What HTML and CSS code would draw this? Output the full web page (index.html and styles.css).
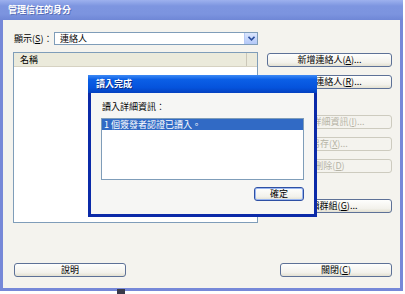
FILE: index.html
```html
<!DOCTYPE html>
<html lang="zh-Hant">
<head>
  <meta charset="UTF-8" />
  <title>管理信任的身分</title>
  <link rel="stylesheet" href="styles.css">
</head>
<body>
  <div class="window">
    <div class="titlebar">管理信任的身分</div>

    <div class="content">
      <div class="main">
        <div class="left-col">
          <div class="show-row">
            <span class="label">顯示(<u>S</u>)：</span>
            <div class="combo">
              <span class="combo-text">連絡人</span>
              <span class="combo-btn">
                <svg width="7" height="5" viewBox="0 0 7 5"><path d="M0.5 0.8 L3.5 3.8 L6.5 0.8" fill="none" stroke="#2c4f9e" stroke-width="1.6"/></svg>
              </span>
            </div>
          </div>
          <div class="list">
            <div class="list-head">
              <span class="col-name">名稱</span>
              <span class="col-end"></span>
            </div>
          </div>
        </div>

        <div class="right-col">
          <button class="btn">新增連絡人(<u>A</u>)...</button>
          <button class="btn">移除連絡人(<u>R</u>)...</button>
          <button class="btn gap" disabled>檢視詳細資訊(<u>I</u>)...</button>
          <button class="btn" disabled>另存(<u>X</u>)...</button>
          <button class="btn" disabled>刪除(<u>D</u>)</button>
          <button class="btn gap">編輯群組(<u>G</u>)...</button>
        </div>
      </div>

      <div class="bottom-row">
        <button class="btn wide">說明</button>
        <button class="btn wide">關閉(<u>C</u>)</button>
      </div>
    </div>

    <div class="dialog">
      <div class="dlg-title">讀入完成</div>
      <div class="dlg-body">
        <div class="dlg-label">讀入詳細資訊：</div>
        <div class="dlg-list">
          <div class="dlg-item selected">1 個簽發者認證已讀入。</div>
        </div>
        <div class="dlg-actions">
          <button class="btn ok">確定</button>
        </div>
      </div>
    </div>
  </div>
  <div class="taskbit"></div>
</body>
</html>
```

FILE: styles.css
```css
body {
  margin: 0;
  background: #fff;
  font-family: "Noto Sans CJK TC", "Noto Sans", sans-serif;
  font-size: 9px;
  color: #000;
  width: 405px;
  height: 294px;
  overflow: hidden;
  position: relative;
}

.window {
  position: relative;
  width: 397px;
  height: 288px;
  border: 3px solid #7688d8;
  border-top: none;
  background: #f4f3ee;
}

.titlebar {
  height: 20px;
  line-height: 20px;
  margin: 0 -3px;
  padding-left: 8px;
  background: linear-gradient(to bottom, #9db1ee 0%, #7d95e0 30%, #7c94df 70%, #6f87d6 100%);
  color: #fff;
  font-weight: bold;
  font-size: 9px;
  text-shadow: 1px 1px 0 #5a6fb8;
}

.content {
  padding: 12px 8px 0 10px;
}

.main {
  display: flex;
  gap: 9px;
}

.left-col {
  width: 245px;
}

.show-row {
  display: flex;
  align-items: center;
  height: 13px;
}

.label {
  width: 40px;
  padding-left: 1px;
}

.label u, .btn u {
  text-decoration: underline;
}

.combo {
  flex: 1;
  display: flex;
  align-items: center;
  height: 13px;
  border: 1px solid #7f9db9;
  background: #fff;
  box-sizing: border-box;
}

.combo-text {
  flex: 1;
  padding-left: 5px;
}

.combo-btn {
  width: 12px;
  height: 11px;
  display: flex;
  align-items: center;
  justify-content: center;
  background: linear-gradient(to bottom, #dbe6fd, #b3c8f8);
  border-left: 1px solid #b6c9f5;
}

.list {
  margin-top: 7px;
  height: 171px;
  border: 1px solid #7f9db9;
  background: #fff;
  box-sizing: border-box;
}

.list-head {
  display: flex;
  height: 13px;
  line-height: 13px;
  background: #ebeadb;
  border-bottom: 1px solid #d6d2c2;
}

.col-name {
  width: 233px;
  padding-left: 6px;
  box-sizing: border-box;
  border-right: 1px solid #cbc7b8;
}

.right-col {
  width: 125px;
  padding-top: 21px;
  display: flex;
  flex-direction: column;
  gap: 8px;
}

.btn {
  height: 14px;
  padding: 0;
  font-family: inherit;
  font-size: 9px;
  color: #000;
  border: 1px solid #5d7197;
  border-radius: 3px;
  background: linear-gradient(to bottom, #fefefd 0%, #f3f2ec 70%, #e3e0d2 100%);
  line-height: 12px;
}

.btn:disabled {
  color: #b6b4a6;
  border-color: #cdcbbf;
  background: #f4f3ee;
}

.btn.gap {
  margin-top: 18px;
}

.bottom-row {
  display: flex;
  justify-content: space-between;
  margin-top: 40px;
  padding-left: 1px;
}

.btn.wide {
  width: 112px;
}

.dialog {
  position: absolute;
  left: 85px;
  top: 75px;
  width: 223px;
  height: 139px;
  border: 3px solid #0b2aa8;
  border-top: none;
  background: #f6f6f4;
}

.dlg-title {
  height: 18px;
  line-height: 18px;
  margin: 0 -3px;
  padding-left: 8px;
  background: linear-gradient(to bottom, #3d8af5 0%, #0b5fe6 25%, #0553dc 70%, #0441c0 100%);
  color: #fff;
  font-weight: bold;
  text-shadow: 1px 1px 0 #0a2a80;
}

.dlg-body {
  padding: 8px 10px 0 10px;
}

.dlg-label {
  height: 12px;
  line-height: 12px;
  padding-left: 1px;
}

.dlg-list {
  margin-top: 5px;
  height: 62px;
  border: 1px solid #7f9db9;
  background: #fff;
  box-sizing: border-box;
}

.dlg-item {
  height: 11px;
  line-height: 11px;
  padding-left: 2px;
}

.dlg-item.selected {
  background: #316ac5;
  color: #fff;
}

.dlg-actions {
  display: flex;
  justify-content: flex-end;
  margin-top: 7px;
}

.btn.ok {
  width: 50px;
  border-color: #2e50a4;
  box-shadow: inset 0 0 0 1px #9ab6f0;
}

.taskbit {
  position: absolute;
  left: 117px;
  top: 289px;
  width: 8px;
  height: 5px;
  background: #3a3a4a;
}
```
